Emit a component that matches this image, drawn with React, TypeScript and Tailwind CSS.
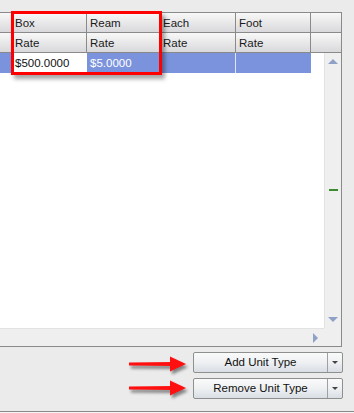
const headCell = 'h-[20px] border-r border-b border-[#8a8a8a] bg-gradient-to-b from-[#f8f8f8] to-[#d9d9dc] px-[3px] text-[11.5px] leading-[20px] text-[#1a1a1a]';

const cols = [
  { w: 'w-[12px]', a: '', b: '' },
  { w: 'w-[75px]', a: 'Box', b: 'Rate' },
  { w: 'w-[73px]', a: 'Ream', b: 'Rate' },
  { w: 'w-[76px]', a: 'Each', b: 'Rate' },
  { w: 'w-[75px]', a: 'Foot', b: 'Rate' },
  { w: 'w-[30px]', a: '', b: '' },
];

const Arrow = () => (
  <svg width="60" height="16" viewBox="0 0 60 16" className="drop-shadow-[2px_3px_1.5px_rgba(0,0,0,0.45)]">
    <path d="M0 6.5 L44 6 L44 10 L0 9.5 Z" fill="#ff1010" />
    <path d="M41 0.5 L57 8 L41 15.5 Z" fill="#ff1010" />
  </svg>
);

const SplitButton = ({ label }: { label: string }) => (
  <div className="flex h-[21px] w-[150px] rounded-[2px] border border-[#8e8f8f] bg-gradient-to-b from-[#fafafa] via-[#eef0f2] to-[#d9dee5] text-[11.5px] text-[#111]">
    <div className="flex flex-1 items-center justify-center border-r border-[#a0a0a0]">{label}</div>
    <div className="flex w-[14px] items-center justify-center">
      <div className="h-0 w-0 border-x-[3px] border-t-[3px] border-x-transparent border-t-[#444]" />
    </div>
  </div>
);

export default function App() {
  return (
    <div
      className="relative flex h-[413px] w-[354px] flex-col bg-[#ebebeb]"
      style={{ fontFamily: '"Liberation Sans", Arial, sans-serif' }}
    >
      <div className="h-[12px]" />
      <div className="flex h-[335px] w-[342px] flex-col border-r border-b border-t border-[#8a8a8a] bg-white">
        {/* header rows */}
        <div className="flex">
          {cols.map((c, i) => (
            <div key={i} className={`${c.w} ${headCell} ${i === cols.length - 1 ? 'border-r-0' : ''}`}>{c.a}</div>
          ))}
        </div>
        <div className="flex">
          {cols.map((c, i) => (
            <div key={i} className={`${c.w} ${headCell} ${i === cols.length - 1 ? 'border-r-0' : ''}`}>{c.b}</div>
          ))}
        </div>
        <div className="flex flex-1">
          <div className="flex flex-1 flex-col">
            <div className="flex h-[20px] text-[11.5px] leading-[20px]">
              <div className="w-[12px] bg-[#7b93dc]" />
              <div className="w-[75px] bg-white px-[3px] text-[#111]">$500.0000</div>
              <div className="w-[73px] bg-[#7b93dc] px-[3px] text-white">$5.0000</div>
              <div className="w-[76px] border-r border-[#dfe5f5] bg-[#7b93dc]" />
              <div className="w-[75px] bg-[#7b93dc]" />
            </div>
            <div className="flex-1" />
          </div>
          <div className="relative flex w-[17px] flex-col items-center justify-between border-l border-[#e2e2e2] bg-[#efefef] py-[6px]">
            <div className="h-0 w-0 border-x-[5px] border-b-[5px] border-x-transparent border-b-[#8fa1c6]" />
            <div className="absolute top-[136px] h-[2px] w-[9px] bg-[#3d8b2f]" />
            <div className="h-0 w-0 border-x-[5px] border-t-[5px] border-x-transparent border-t-[#8fa1c6]" />
          </div>
        </div>
        <div className="flex h-[18px]">
          <div className="flex flex-1 items-center justify-end border-t border-[#e2e2e2] bg-[#efefef] pr-[6px]">
            <div className="h-0 w-0 border-y-[5px] border-l-[5px] border-y-transparent border-l-[#8fa1c6]" />
          </div>
          <div className="w-[17px] bg-[#efefef]" />
        </div>
      </div>

      <div className="flex flex-1 flex-col items-end gap-[5px] pr-[11px] pt-[5px]">
        <SplitButton label="Add Unit Type" />
        <SplitButton label="Remove Unit Type" />
      </div>
      <div className="h-[2px] border-t border-[#8a8a8a] bg-[#f5f5f5]" />

      {/* annotations */}
      <div className="absolute left-[11px] top-[11px] h-[64px] w-[151px] border-[3px] border-[#ff0000] shadow-[3px_4px_4px_rgba(0,0,0,0.35)]" />
      <div className="absolute left-[129px] top-[356px]">
        <Arrow />
      </div>
      <div className="absolute left-[129px] top-[380px]">
        <Arrow />
      </div>
    </div>
  );
}
